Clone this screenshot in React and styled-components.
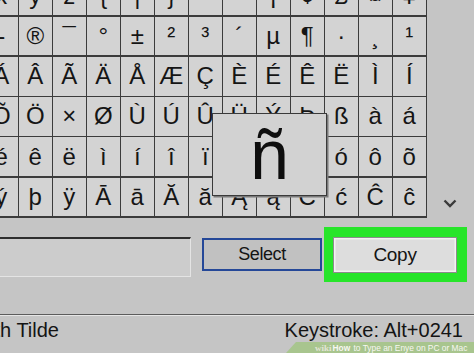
import React from 'react';
import styled, { createGlobalStyle } from 'styled-components';

const ROWS = [
  ['x', 'y', 'z', '{', '|', '}', '~', '\u00a0', '¡', '¢', '£', '¤', '¥'],
  ['-', '®', '¯', '°', '±', '²', '³', '´', 'µ', '¶', '·', '¸', '¹'],
  ['Á', 'Â', 'Ã', 'Ä', 'Å', 'Æ', 'Ç', 'È', 'É', 'Ê', 'Ë', 'Ì', 'Í'],
  ['Õ', 'Ö', '×', 'Ø', 'Ù', 'Ú', 'Û', 'Ü', 'Ý', 'Þ', 'ß', 'à', 'á'],
  ['é', 'ê', 'ë', 'ì', 'í', 'î', 'ï', 'ð', 'ñ', 'ò', 'ó', 'ô', 'õ'],
  ['ý', 'þ', 'ÿ', 'Ā', 'ā', 'Ă', 'ă', 'Ą', 'ą', 'Ć', 'ć', 'Ĉ', 'ĉ'],
];

export default function App() {
  return (
    <>
      <GlobalStyle />
      <Window>
        <TopArea>
          <GridWrap>
            <CharGrid>
              {ROWS.flat().map((ch, i) => (
                <Cell key={i}>{ch}</Cell>
              ))}
            </CharGrid>
            <Magnifier>ñ</Magnifier>
          </GridWrap>
          <ScrollColumn>
            <svg width="14" height="9" viewBox="0 0 14 9">
              <polyline points="1.5,1.5 7,7 12.5,1.5" fill="none" stroke="#3a3a3a" strokeWidth="2.4" />
            </svg>
          </ScrollColumn>
        </TopArea>

        <Controls>
          <CopyField />
          <SelectButton>Select</SelectButton>
          <Highlight>
            <CopyButton>Copy</CopyButton>
          </Highlight>
        </Controls>

        <StatusBar>
          <CharName>
            <span>U+00F1: Latin Small Letter N With Tilde</span>
          </CharName>
          <Keystroke>Keystroke: Alt+0241</Keystroke>
        </StatusBar>

        <Watermark>
          <b className="wiki">wiki</b>
          <b>How</b> to Type an Enye on PC or Mac
        </Watermark>
      </Window>
    </>
  );
}

const GlobalStyle = createGlobalStyle`
  body {
    margin: 0;
    background: #c5c5c5;
    overflow: hidden;
  }
`;

const Window = styled.div`
  position: relative;
  width: 474px;
  height: 353px;
  overflow: hidden;
  background: #c5c5c5;
  font-family: "Liberation Sans", Arial, sans-serif;
  color: #141414;
`;

/**
 * Character grid
 */
const TopArea = styled.div`
  display: flex;
  align-items: stretch;
`;

const GridWrap = styled.div`
  position: relative;
  margin-left: -16.5px;
  margin-top: -25.3px;
`;

const CharGrid = styled.div`
  display: grid;
  grid-template-columns: repeat(13, 32.5px);
  grid-template-rows: repeat(6, 38.8px);
  gap: 1.5px;
  padding: 1.5px;
  background: #3b3b3b;
`;

const Cell = styled.div`
  display: flex;
  align-items: center;
  justify-content: center;
  background: #d3d3d3;
  font-size: 24px;
  color: #151515;
`;

const Magnifier = styled.div`
  position: absolute;
  left: 228.5px;
  top: 138.3px;
  width: 113px;
  height: 81px;
  display: flex;
  align-items: center;
  justify-content: center;
  background: #d2d2d2;
  border: 1.5px solid #3a3a3a;
  box-shadow: 1.5px 1.5px 0 #7a7a7a;
  font-size: 70px;
  color: #0e0e0e;
`;

const ScrollColumn = styled.div`
  flex: 1;
  display: flex;
  align-items: flex-end;
  justify-content: center;
  padding-bottom: 10px;
  padding-right: 2px;
`;

/**
 * Bottom controls
 */
const Controls = styled.div`
  display: flex;
  align-items: flex-start;
  margin-top: 9px;
`;

const CopyField = styled.div`
  margin-left: -10px;
  margin-top: 10px;
  width: 200px;
  height: 37px;
  background: #cccccc;
  border-top: 2px solid #2e2e2e;
  border-right: 1.5px solid #e4e4e4;
  border-bottom: 1.5px solid #e4e4e4;
`;

const SelectButton = styled.div`
  margin-left: 11px;
  margin-top: 11px;
  width: 116px;
  height: 29px;
  display: flex;
  align-items: center;
  justify-content: center;
  background: #c1c1c1;
  border: 2px solid #254898;
  font-size: 18px;
  letter-spacing: -0.4px;
`;

const Highlight = styled.div`
  margin-left: 2px;
  width: 143px;
  height: 55px;
  box-sizing: border-box;
  padding: 10px 10px 9px 9px;
  background: #27e52a;
`;

const CopyButton = styled.div`
  height: 100%;
  display: flex;
  align-items: center;
  justify-content: center;
  box-sizing: border-box;
  background: #dddddd;
  border: 1px solid #8c8c8c;
  box-shadow: inset 0 0 0 1.5px #f2f2f2;
  font-size: 19px;
  letter-spacing: -0.3px;
`;

/**
 * Status bar
 */
const StatusBar = styled.div`
  display: flex;
  justify-content: space-between;
  align-items: center;
  margin-top: 32px;
  padding: 3px 11px 0 0;
  border-top: 1px solid #5c5c5c;
  box-shadow: inset 0 1px 0 #e6e6e6;
  font-size: 20px;
  line-height: 24px;
`;

const CharName = styled.div`
  width: 59px;
  display: flex;
  justify-content: flex-end;
  overflow: hidden;
  white-space: nowrap;
`;

const Keystroke = styled.div`
  white-space: nowrap;
`;

const Watermark = styled.div`
  position: absolute;
  right: 0;
  bottom: 0;
  width: 188px;
  height: 11px;
  padding-left: 29px;
  box-sizing: border-box;
  display: flex;
  align-items: center;
  gap: 1px;
  background: rgba(160, 196, 128, 0.8);
  clip-path: polygon(10px 0, 100% 0, 100% 100%, 0 100%);
  font-size: 8.4px;
  color: #f7f7f2;
  white-space: pre;
  overflow: hidden;

  & .wiki {
    font-family: "Liberation Serif", serif;
    font-size: 9px;
    color: #e2e4d6;
  }
`;
